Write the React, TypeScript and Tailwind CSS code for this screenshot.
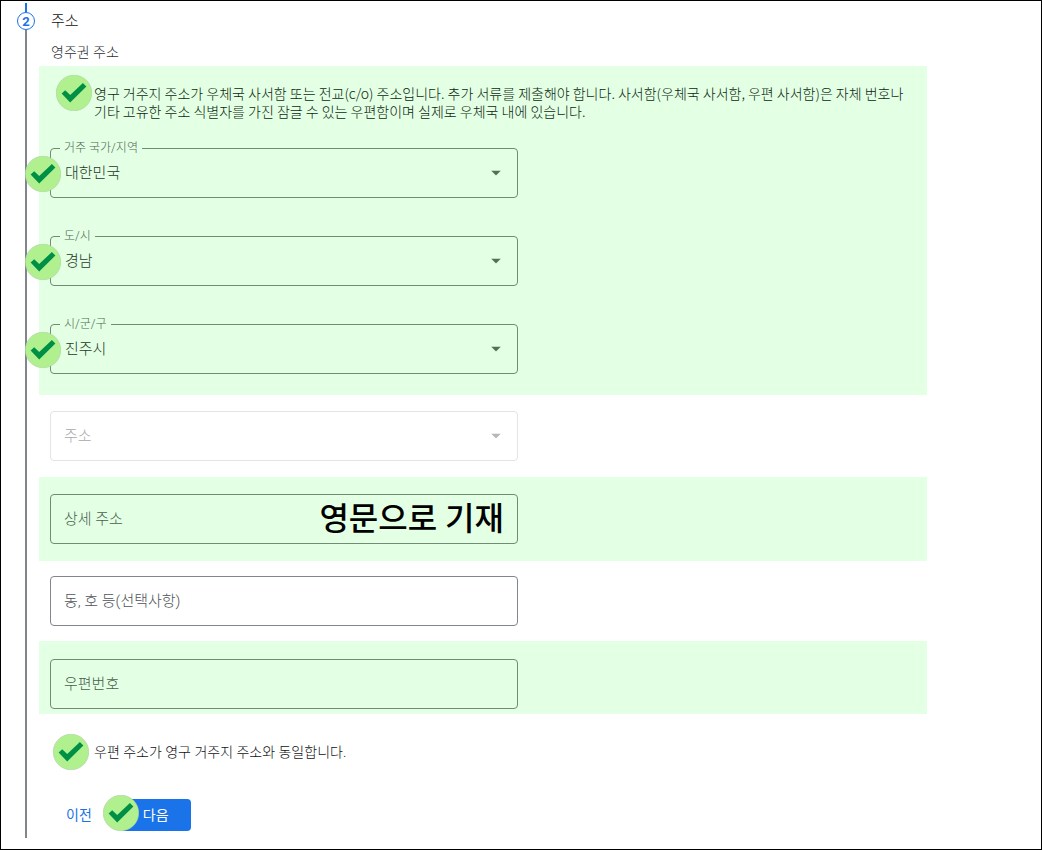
import { useState } from "react";
import type { ReactNode } from "react";
import clsx from "clsx";

const CheckMark = () => (
  <svg viewBox="0 0 36 36" className="pointer-events-none absolute inset-0 size-9" aria-hidden="true">
    <circle cx="18" cy="18" r="17.8" fill="#b0f08f" stroke="#a9c8a0" strokeWidth="0.5" />
    <polygon points="5.6,18.6 9.2,15.2 14.2,20 26.9,8 30.4,11.4 14.2,27.4" fill="#009045" />
  </svg>
);

const Badge = ({ className }: { className: string }) => (
  <span className={clsx("pointer-events-none absolute size-9", className)}>
    <CheckMark />
  </span>
);

const Arrow = ({ disabled }: { disabled?: boolean }) => (
  <svg
    viewBox="0 0 10 5"
    className={clsx(
      "pointer-events-none absolute right-[17px] top-1/2 h-[5px] w-[10px] -translate-y-1/2",
      disabled ? "text-[#b8b8b8]" : "text-[#566e5a]"
    )}
    aria-hidden="true"
  >
    <polygon points="0,0 10,0 5,5" fill="currentColor" />
  </svg>
);

const Highlight = ({ className, children }: { className: string; children: ReactNode }) => (
  <section className={clsx("bg-[#e3ffe4] pl-[11px]", className)}>{children}</section>
);

const SelectField = ({ id, label, options }: { id: string; label: string; options: string[] }) => (
  <div className="relative h-[50px] w-[468px] max-w-full">
    <select
      id={id}
      className="h-full w-full appearance-none rounded border border-[#718b74] bg-transparent px-[14px] text-[15px] text-[#26382a]"
    >
      {options.map((o) => (
        <option key={o}>{o}</option>
      ))}
    </select>
    <label
      htmlFor={id}
      className="absolute -top-2 left-[10px] bg-[#e3ffe4] px-1 text-[12px] leading-4 text-[#4f6853]"
    >
      {label}
    </label>
    <Arrow />
    <Badge className="-left-[25px] top-[8px]" />
  </div>
);

const TextField = ({ label, tinted, note }: { label: string; tinted?: boolean; note?: string }) => (
  <div className="relative h-[50px] w-[468px] max-w-full">
    <input
      type="text"
      aria-label={label}
      placeholder={label}
      className={clsx(
        "h-full w-full rounded border bg-transparent px-[13px] text-[15px] outline-none",
        tinted
          ? "border-[#718b74] placeholder:text-[#48604c]"
          : "border-[#80868b] placeholder:text-[#4f5358]"
      )}
    />
    {note && (
      <span className="pointer-events-none absolute inset-y-0 right-[14px] flex items-center text-[32px] font-medium leading-none text-black">
        {note}
      </span>
    )}
  </div>
);

const CheckRow = ({ className, textClass, children }: { className: string; textClass?: string; children: ReactNode }) => {
  const [checked, setChecked] = useState(true);
  return (
    <label className={clsx("flex", className)}>
      <span className="relative size-9 shrink-0">
        <input
          type="checkbox"
          checked={checked}
          onChange={() => setChecked(!checked)}
          className="size-9 appearance-none rounded-full"
        />
        {checked && <CheckMark />}
      </span>
      <span className={clsx("text-[14px] leading-[18px]", textClass)}>{children}</span>
    </label>
  );
};

export default function App() {
  return (
    <main className="flex min-h-screen gap-1 border border-black bg-white pb-[11px] pl-4 font-['Roboto','Noto_Sans_CJK_KR',sans-serif] font-light text-[#101114]">
      {/* Stepper rail */}
      <div className="flex w-[18px] shrink-0 flex-col items-center pt-[2px]">
        <div className="h-[9px] w-[2px] bg-[#1a73e8]" />
        <div className="flex size-[18px] items-center justify-center rounded-full border border-[#1a73e8] text-[13px] font-bold leading-none text-[#1a73e8]">
          2
        </div>
        <div className="w-[2px] grow bg-[#80868b]" />
      </div>

      <form className="mr-[114px] min-w-0 grow" onSubmit={(e) => e.preventDefault()}>
        <h2 className="pl-3 pt-[8px] text-[15px] font-light leading-6">주소</h2>
        <h3 className="pb-[4px] pl-3 pt-[9px] text-[14px] font-light leading-5 text-[#2c3033]">영주권 주소</h3>

        <Highlight className="pb-[21px] pt-[9px]">
          <CheckRow
            className="gap-[2px] pl-[6px] pr-4"
            textClass="pt-[9px] font-['Noto_Sans_CJK_KR',sans-serif] text-[#0d1f10]"
          >
            영구 거주지 주소가 우체국 사서함 또는 전교(c/o) 주소입니다. 추가 서류를 제출해야 합니다. 사서함(우체국
            사서함, 우편 사서함)은 자체 번호나 기타 고유한 주소 식별자를 가진 잠글 수 있는 우편함이며 실제로 우체국
            내에 있습니다.
          </CheckRow>
          <div className="mt-[28px] flex flex-col gap-[38px]">
            <SelectField id="country" label="거주 국가/지역" options={["대한민국"]} />
            <SelectField id="province" label="도/시" options={["경남"]} />
            <SelectField id="city" label="시/군/구" options={["진주시"]} />
          </div>
        </Highlight>

        <div className="py-4 pl-[11px]">
          <div className="relative h-[50px] w-[468px] max-w-full">
            <select
              disabled
              aria-label="주소"
              className="h-full w-full appearance-none rounded border border-[#e4e4e5] bg-transparent px-[13px] text-[15px] text-[#a8a8a9] opacity-100"
            >
              <option>주소</option>
            </select>
            <Arrow disabled />
          </div>
        </div>

        <Highlight className="py-[17px]">
          <TextField label="상세 주소" tinted note="영문으로 기재" />
        </Highlight>

        <div className="py-[15px] pl-[11px]">
          <TextField label="동, 호 등(선택사항)" />
        </div>

        <Highlight className="pb-[5px] pt-[18px]">
          <TextField label="우편번호" tinted />
        </Highlight>

        <CheckRow className="items-center gap-[5px] pl-[14px] pt-5">
          우편 주소가 영구 거주지 주소와 동일합니다.
        </CheckRow>

        <div className="mb-[7px] mt-[29px] flex pl-3 text-[14px]">
          <button type="button" className="h-8 px-[15px] font-normal text-[#1a73e8]">
            이전
          </button>
          <span className="relative ml-[14px]">
            <button type="submit" className="h-8 rounded bg-[#1a73e8] px-[22px] font-normal text-white">
              다음
            </button>
            <Badge className="-left-[18px] -top-[4px]" />
          </span>
        </div>
      </form>
    </main>
  );
}
